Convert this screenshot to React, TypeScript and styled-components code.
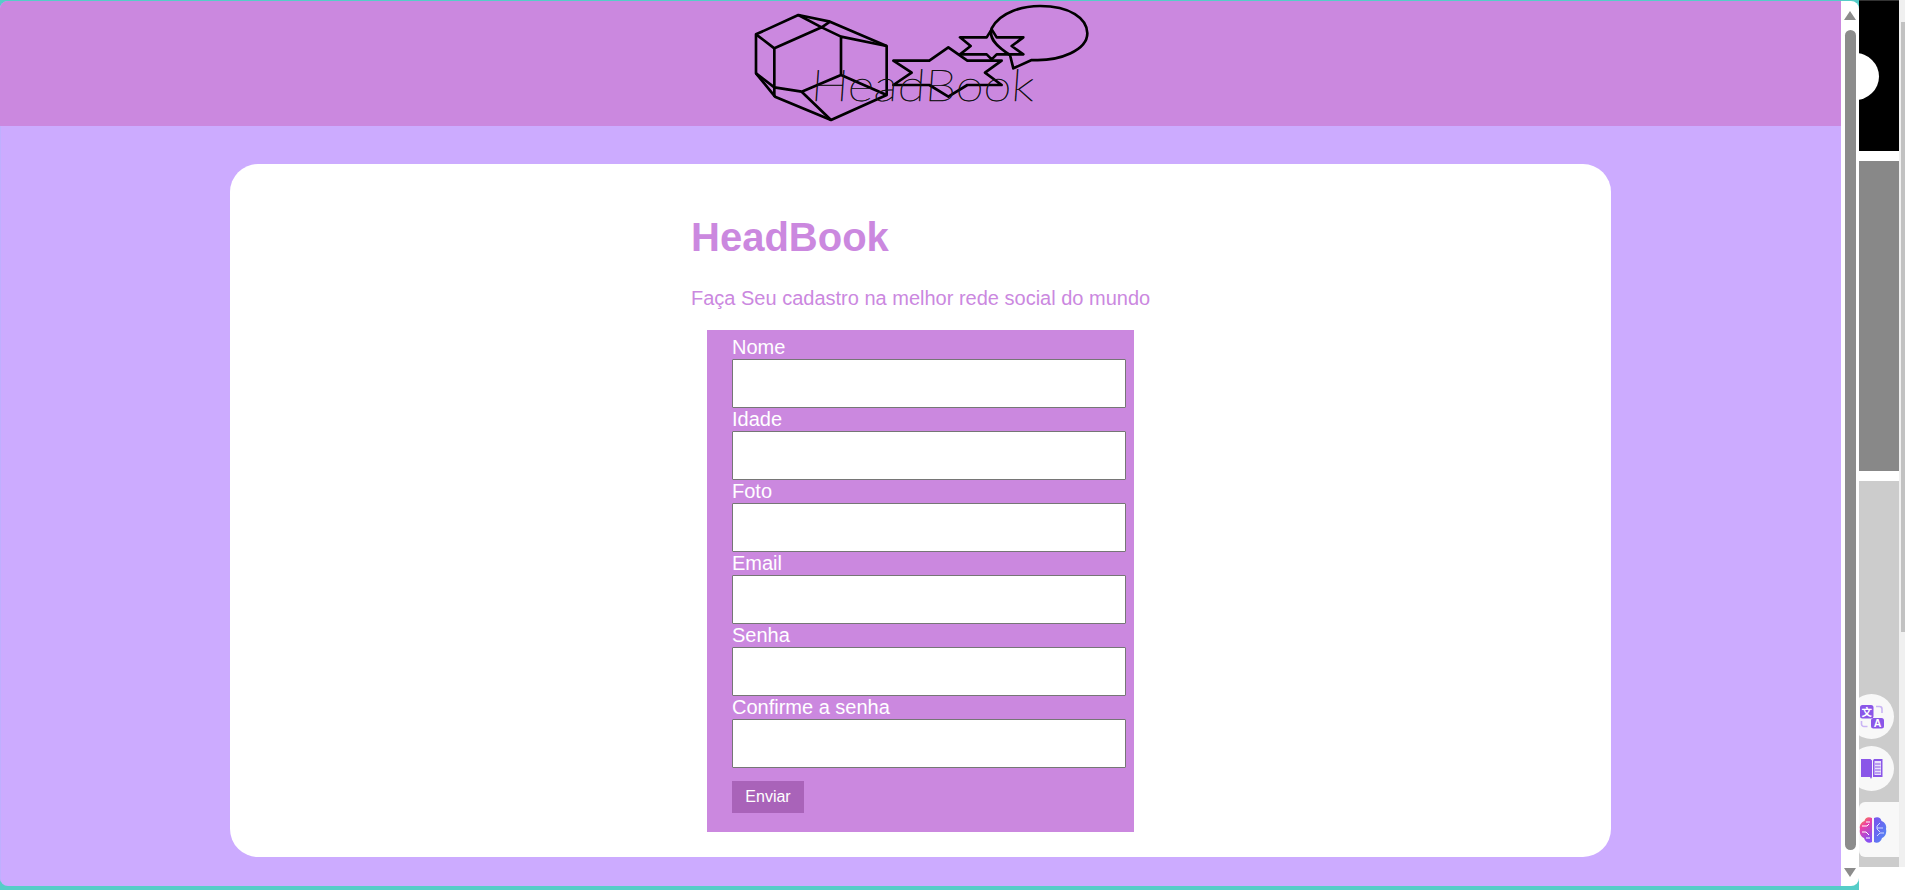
import React from "react";
import styled, { createGlobalStyle } from "styled-components";

const Global = createGlobalStyle`
  html, body { margin: 0; padding: 0; overflow: hidden; background: #fff; }
  * { box-sizing: border-box; }
  body { font-family: "Liberation Sans", Arial, sans-serif; }
`;

const Screen = styled.div`
  display: flex;
  width: 1905px;
  height: 890px;
  overflow: hidden;
`;

const BrowserWindow = styled.div`
  width: 1859px;
  height: 890px;
  flex: none;
  padding: 1px 0 4px 0;
  background: #55cdc8;
`;

const Viewport = styled.div`
  display: flex;
  height: 885px;
  border-radius: 8px;
  overflow: hidden;
`;

const Page = styled.div`
  flex: 1;
  min-width: 0;
  border-left: 1px solid #bfb0ff;
  background: #ccabff;
`;

const Header = styled.header`
  display: flex;
  justify-content: center;
  height: 125px;
  margin-left: -1px;
  padding-left: 19px;
  background: #cb88df;
`;

const Main = styled.main`
  padding-top: 38px;
`;

const Card = styled.section`
  width: 1381px;
  height: 693px;
  margin-left: 229px;
  padding: 50px 0 0 461px;
  background: #fff;
  border-radius: 28px;
`;

const Title = styled.h1`
  margin: 0;
  font-size: 40px;
  line-height: 46px;
  font-weight: 700;
  color: #cb88df;
`;

const Lead = styled.p`
  margin: 27px 0 0;
  font-size: 20px;
  line-height: 23px;
  color: #cb88df;
`;

const Form = styled.form`
  width: 427px;
  height: 502px;
  margin: 20px 0 0 16px;
  padding: 6px 0 0 25px;
  background: #cb88df;
`;

const Field = styled.div`
  display: flex;
  flex-direction: column;
`;

const Label = styled.label`
  font-size: 20px;
  line-height: 23px;
  color: #fff;
`;

const Input = styled.input`
  display: block;
  width: 394px;
  height: 49px;
  border: 1px solid #767676;
  border-radius: 1px;
  background: #fff;
`;

const Submit = styled.button`
  display: block;
  width: 72px;
  height: 32px;
  margin-top: 13px;
  padding: 0;
  border: none;
  background: #a963b9;
  color: #fff;
  font-family: "Liberation Sans", Arial, sans-serif;
  font-size: 16px;
`;

const ScrollTrack = styled.div`
  flex: none;
  width: 18px;
  display: flex;
  flex-direction: column;
  align-items: center;
  padding: 10px 0 9px;
  background: #fff;
`;

const ScrollThumb = styled.div`
  flex: 1;
  width: 11px;
  margin: 10px 0 18px;
  background: #8c8c8c;
  border-radius: 6px;
`;

const Arrow = styled.div<{ $down?: boolean }>`
  width: 0;
  height: 0;
  border-left: 6px solid transparent;
  border-right: 6px solid transparent;
  ${(p) =>
    p.$down
      ? "border-top: 9px solid #8c8c8c;"
      : "border-bottom: 9px solid #8c8c8c;"}
`;

const Side = styled.aside`
  flex: 1;
  display: flex;
  overflow: hidden;
`;

const Panels = styled.div`
  width: 40px;
  flex: none;
  display: flex;
  flex-direction: column;
  background: #fff;
`;

const BlackPanel = styled.div`
  position: relative;
  height: 151px;
  background: #000;
  border-top: 1px solid #333;
`;

const Blob = styled.div`
  position: absolute;
  left: -28px;
  top: 52px;
  width: 48px;
  height: 47px;
  border-radius: 50%;
  background: #fff;
`;

const GrayPanel = styled.div`
  height: 310px;
  margin-top: 10px;
  background: #888;
`;

const LightPanel = styled.div`
  position: relative;
  height: 386px;
  margin-top: 10px;
  background: #ccc;
`;

const Bubble = styled.div<{ $top: number; $inset: number }>`
  position: absolute;
  left: -10px;
  top: ${(p) => p.$top}px;
  display: flex;
  align-items: center;
  width: 45px;
  height: 45px;
  padding-left: ${(p) => p.$inset}px;
  border-radius: 50%;
  background: #f8f8f8;
`;

const BrainTile = styled.div`
  position: absolute;
  left: 0;
  top: 321px;
  display: flex;
  align-items: center;
  width: 40px;
  height: 55px;
  border-radius: 6px 0 0 6px;
  background: #f8f8f8;
`;

const Strip = styled.div`
  flex: 1;
  height: 867px;
  background: #f0f0f0;
`;

const StripThumb = styled.div`
  height: 610px;
  margin: 22px 0 0 2px;
  background: #c2c2c2;
`;

const Logo = () => (
  <svg width="400" height="125" viewBox="0 3 1200 375" fill="none" stroke="#000" strokeWidth="8" strokeLinejoin="round">
    <path d="M205 45 78 103V220L135 290 303 360 470 285V138L300 65Z" />
    <path d="M78 103 133 145V290M133 145 275 82 333 110V225L215 275 303 360M205 45 275 82 300 65M333 110 470 138M333 225 470 285M78 220 133 262M215 275 133 262" />
    <path d="M490 182H598L655 142 712 182H815L765 218 815 255H712L655 290 598 255H490L545 218Z" />
    <path d="M690 112H770L785 88 800 112H880L845 138 880 163H800L785 178 770 163H690L722 138Z" />
    <path d="M840 165C800 140 775 115 785 85 810 35 880 18 930 18 1020 18 1072 55 1072 100 1072 150 990 185 905 180L850 205Z" />
    <text
      x="240"
      y="303"
      transform="translate(21 0) skewX(-4)"
      fill="#111"
      stroke="#111"
      strokeWidth="1.5"
      fontFamily="Lato, Roboto, sans-serif"
      fontWeight="100"
      fontSize="132"
      textLength="670"
      lengthAdjust="spacingAndGlyphs"
    >
      HeadBook
    </text>
  </svg>
);

const TranslateIcon = () => (
  <svg width="24" height="24" viewBox="0 0 24 24">
    <rect x="0" y="0" width="13.5" height="13.5" rx="2.5" fill="#8a56e8" />
    <text x="6.7" y="10.6" fontSize="10.5" fontWeight="700" textAnchor="middle" fill="#fff" fontFamily="'Noto Sans CJK SC', sans-serif">文</text>
    <rect x="11" y="13" width="13" height="10.5" rx="2.5" fill="#8a56e8" />
    <text x="17.5" y="22.3" fontSize="10.5" fontWeight="700" textAnchor="middle" fill="#fff" fontFamily="'Liberation Sans', sans-serif">A</text>
    <path d="M16 1.5h3.5a2.5 2.5 0 0 1 2.5 2.5v4M1.5 16v3a2.5 2.5 0 0 0 2.5 2.5h3.5" fill="none" stroke="#c9b4f4" strokeWidth="1.6" />
  </svg>
);

const BookIcon = () => (
  <svg width="22" height="22" viewBox="0 0 22 22">
    <path d="M0 1H9.5L11 2.5V19L10 21 9 19H0Z" fill="#8a56e8" />
    <path d="M12 2.5 13 1H21.5V19H12Z" fill="#8a56e8" />
    <rect x="13.5" y="3" width="6.5" height="14" fill="#e9e0fb" />
    <path d="M14 6h5.5M14 9h5.5M14 12h5.5M14 15h5.5" stroke="#8a56e8" strokeWidth="1.1" />
  </svg>
);

const BrainIcon = () => (
  <svg width="28" height="28" viewBox="0 0 28 28">
    <defs>
      <linearGradient id="lobe" x1="0" y1="0" x2="0.4" y2="1">
        <stop offset="0" stopColor="#f7a12a" />
        <stop offset="0.4" stopColor="#ee3fa4" />
        <stop offset="1" stopColor="#8a4ff0" />
      </linearGradient>
      <linearGradient id="lobe2" x1="0" y1="0" x2="1" y2="1">
        <stop offset="0" stopColor="#7b52ee" />
        <stop offset="1" stopColor="#4f8cf5" />
      </linearGradient>
    </defs>
    <path d="M13 2C9 0 6 2 5.5 5 2 6 0 10 1 13 0 17 2 21 5 22 6 26 10 28 13 26Z" fill="url(#lobe)" />
    <path d="M15 2C19 0 22 2 22.5 5 26 6 28 10 27 13 28 17 26 21 23 22 22 26 18 28 15 26Z" fill="url(#lobe2)" />
    <path d="M3 10h5l2-2M3 16h4l3 3M7 6h4M7 22h4" stroke="#fff" strokeWidth="1" fill="none" />
    <path d="M21 7l-3 3v3M24 12h-6M18 20l3-3h4M18 13l3 3" stroke="#cfd8ff" strokeWidth="1" fill="none" />
  </svg>
);

const fields = ["Nome", "Idade", "Foto", "Email", "Senha", "Confirme a senha"];

export default function App() {
  return (
    <>
      <Global />
      <Screen>
        <BrowserWindow>
          <Viewport>
            <Page>
              <Header>
                <Logo />
              </Header>
              <Main>
                <Card>
                  <Title>HeadBook</Title>
                  <Lead>Faça Seu cadastro na melhor rede social do mundo</Lead>
                  <Form onSubmit={(e) => e.preventDefault()}>
                    {fields.map((f) => (
                      <Field key={f}>
                        <Label>{f}</Label>
                        <Input />
                      </Field>
                    ))}
                    <Submit>Enviar</Submit>
                  </Form>
                </Card>
              </Main>
            </Page>
            <ScrollTrack>
              <Arrow />
              <ScrollThumb />
              <Arrow $down />
            </ScrollTrack>
          </Viewport>
        </BrowserWindow>
        <Side>
          <Panels>
            <BlackPanel>
              <Blob />
            </BlackPanel>
            <GrayPanel />
            <LightPanel>
              <Bubble $top={213} $inset={11}>
                <TranslateIcon />
              </Bubble>
              <Bubble $top={265} $inset={12}>
                <BookIcon />
              </Bubble>
              <BrainTile>
                <BrainIcon />
              </BrainTile>
            </LightPanel>
          </Panels>
          <Strip>
            <StripThumb />
          </Strip>
        </Side>
      </Screen>
    </>
  );
}
